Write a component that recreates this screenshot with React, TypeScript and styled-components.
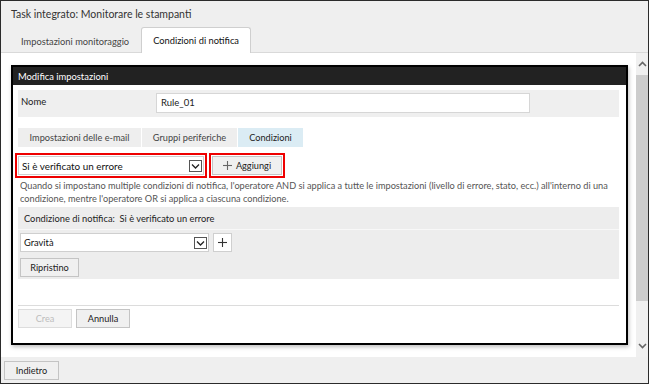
import React from "react";
import styled, { createGlobalStyle } from "styled-components";

const GlobalStyle = createGlobalStyle`
  html, body {
    margin: 0;
    padding: 0;
    background: #ffffff;
  }
  body {
    font-family: Lato, "Noto Sans", "Liberation Sans", sans-serif;
    color: #222;
  }
  * {
    box-sizing: border-box;
  }
`;

const Window = styled.div`
  width: 649px;
  height: 384px;
  border: 1px solid #2b2b2b;
  background: #efefef;
  display: flex;
  flex-direction: column;
  overflow: hidden;
`;

const TitleBar = styled.div`
  height: 26px;
  padding-left: 10px;
  display: flex;
  align-items: center;
  font-size: 10.5px;
  color: #333;
`;

const TabBar = styled.div`
  height: 26px;
  display: flex;
  align-items: flex-end;
  padding-left: 8px;
  gap: 0;
  border-bottom: 1px solid #d9d9d9;
`;

const Tab = styled.div<{ $active?: boolean }>`
  height: ${(p) => (p.$active ? "26px" : "25px")};
  padding: 0 11px;
  display: flex;
  align-items: center;
  font-size: 9.3px;
  color: ${(p) => (p.$active ? "#111" : "#444")};
  background: ${(p) => (p.$active ? "#fff" : "transparent")};
  border: ${(p) => (p.$active ? "1px solid #cfcfcf" : "1px solid transparent")};
  border-bottom: none;
  border-radius: 3px 3px 0 0;
  margin-bottom: -1px;
`;

const Body = styled.div`
  flex: 1;
  display: flex;
  background: #fff;
  min-height: 0;
`;

const Content = styled.div`
  flex: 1;
  min-width: 0;
  padding: 12px 8px 12px 10px;
`;

const Scrollbar = styled.div`
  width: 12px;
  background: #f0f0f0;
  display: flex;
  flex-direction: column;
  align-items: stretch;
`;

const ScrollArrow = styled.div`
  height: 22px;
  display: flex;
  align-items: center;
  justify-content: center;
`;

const ScrollThumb = styled.div`
  height: 226px;
  background: #cdcdcd;
`;

const ScrollTrack = styled.div`
  flex: 1;
`;

const Dialog = styled.div`
  border: 2px solid #000;
  background: #fff;
  box-shadow: 1px 2px 4px rgba(0, 0, 0, 0.25);
  display: flex;
  flex-direction: column;
`;

const DialogHeader = styled.div`
  height: 18px;
  background: #222;
  color: #fff;
  font-size: 9.4px;
  display: flex;
  align-items: center;
  padding-left: 5px;
`;

const DialogBody = styled.div`
  padding: 5px 7px 15px 5px;
  display: flex;
  flex-direction: column;
`;

const NameRow = styled.div`
  height: 27px;
  background: #efefef;
  display: flex;
  align-items: center;
  padding-left: 3px;
`;

const Label = styled.div`
  width: 135px;
  font-size: 9.5px;
  color: #222;
  margin-top: -5px;
`;

const TextInput = styled.div`
  width: 374px;
  height: 20px;
  background: #fff;
  border: 1px solid #d6d6d6;
  font-size: 9.5px;
  display: flex;
  align-items: center;
  padding-left: 4px;
  margin-top: -2px;
`;

const SubTabs = styled.div`
  display: flex;
  gap: 1px;
  margin-top: 11px;
`;

const SubTab = styled.div<{ $active?: boolean; $w: number }>`
  width: ${(p) => p.$w}px;
  height: 19px;
  display: flex;
  align-items: center;
  justify-content: center;
  font-size: 9.2px;
  color: ${(p) => (p.$active ? "#222" : "#444")};
  background: ${(p) => (p.$active ? "#dbecf4" : "#eeeeee")};
`;

const AddRow = styled.div`
  display: flex;
  align-items: center;
  gap: 8px;
  margin-top: 9px;
`;

const Select = styled.div<{ $w: number; $highlight?: boolean }>`
  width: ${(p) => p.$w}px;
  height: 19px;
  background: #fff;
  border: 1px solid #cfcfcf;
  display: flex;
  align-items: center;
  justify-content: space-between;
  padding: 0 1px 0 3px;
  font-size: ${(p) => (p.$highlight ? "9.9px" : "9.3px")};
  color: #111;
  outline: ${(p) => (p.$highlight ? "2px solid #ee0000" : "none")};
  outline-offset: 1px;
`;

const Button = styled.div<{ $w: number; $disabled?: boolean; $highlight?: boolean }>`
  width: ${(p) => p.$w}px;
  height: 19px;
  background: ${(p) => (p.$disabled ? "#f4f4f4" : "#f0f0f0")};
  border: 1px solid ${(p) => (p.$disabled ? "#dddddd" : "#c4c4c4")};
  color: ${(p) => (p.$disabled ? "#bdbdbd" : "#222")};
  font-size: 9.2px;
  display: flex;
  align-items: center;
  justify-content: center;
  gap: 4px;
  outline: ${(p) => (p.$highlight ? "2px solid #ee0000" : "none")};
  outline-offset: 1px;
`;

const PlusButton = styled.div`
  width: 19px;
  height: 19px;
  background: #fff;
  border: 1px solid #cfcfcf;
  display: flex;
  align-items: center;
  justify-content: center;
`;

const HelpText = styled.div`
  margin: 5px 0 2px 2px;
  font-size: 9.2px;
  line-height: 12.5px;
  color: #555;
  white-space: nowrap;
  overflow: hidden;
`;

const ConditionBox = styled.div`
  background: #ededed;
  display: flex;
  flex-direction: column;
`;

const ConditionHeader = styled.div`
  height: 23px;
  display: flex;
  align-items: center;
  padding-left: 6px;
  font-size: 9.3px;
  color: #222;
  border-bottom: 1px solid #f8f8f8;
`;

const ConditionBody = styled.div`
  height: 49px;
  padding: 3px 2px;
  display: flex;
  flex-direction: column;
  gap: 6px;
`;

const InlineRow = styled.div`
  display: flex;
  align-items: center;
  gap: 4px;
`;

const DialogFooter = styled.div`
  margin-top: 26px;
  border-top: 1px solid #dcdcdc;
  padding-top: 3px;
  display: flex;
  gap: 4px;
`;

const BottomBar = styled.div`
  height: 26px;
  display: flex;
  align-items: center;
  padding-left: 3px;
`;

const SelectArrow = () => (
  <svg width="13" height="12" viewBox="0 0 13 12">
    <rect x="0.5" y="0.5" width="12" height="11" fill="#fff" stroke="#555" />
    <polyline points="3,4.5 6.5,8 10,4.5" fill="none" stroke="#222" strokeWidth="1.3" />
  </svg>
);

const PlusIcon = ({ color = "#444" }: { color?: string }) => (
  <svg width="9" height="9" viewBox="0 0 9 9">
    <line x1="4.5" y1="0" x2="4.5" y2="9" stroke={color} strokeWidth="1.1" />
    <line x1="0" y1="4.5" x2="9" y2="4.5" stroke={color} strokeWidth="1.1" />
  </svg>
);

const Chevron = ({ up }: { up?: boolean }) => (
  <svg width="9" height="6" viewBox="0 0 9 6">
    <polyline
      points={up ? "1,5 4.5,1.5 8,5" : "1,1 4.5,4.5 8,1"}
      fill="none"
      stroke="#666"
      strokeWidth="1.6"
    />
  </svg>
);

const App = () => {
  return (
    <>
      <GlobalStyle />
      <Window>
        <TitleBar>Task integrato: Monitorare le stampanti</TitleBar>
        <TabBar>
          <Tab>Impostazioni monitoraggio</Tab>
          <Tab $active>Condizioni di notifica</Tab>
        </TabBar>
        <Body>
          <Content>
            <Dialog>
              <DialogHeader>Modifica impostazioni</DialogHeader>
              <DialogBody>
                <NameRow>
                  <Label>Nome</Label>
                  <TextInput>Rule_01</TextInput>
                </NameRow>
                <SubTabs>
                  <SubTab $w={123}>Impostazioni delle e-mail</SubTab>
                  <SubTab $w={95}>Gruppi periferiche</SubTab>
                  <SubTab $w={65} $active>
                    Condizioni
                  </SubTab>
                </SubTabs>
                <AddRow>
                  <Select $w={186} $highlight>
                    <span>Si è verificato un errore</span>
                    <SelectArrow />
                  </Select>
                  <Button $w={70} $highlight>
                    <PlusIcon color="#666" />
                    Aggiungi
                  </Button>
                </AddRow>
                <HelpText>
                  Quando si impostano multiple condizioni di notifica, l'operatore AND si applica a tutte le
                  impostazioni (livello di errore, stato, ecc.) all'interno di una
                  <br />
                  condizione, mentre l'operatore OR si applica a ciascuna condizione.
                </HelpText>
                <ConditionBox>
                  <ConditionHeader>Condizione di notifica:&nbsp;&nbsp;Si è verificato un errore</ConditionHeader>
                  <ConditionBody>
                    <InlineRow>
                      <Select $w={189}>
                        <span>Gravità</span>
                        <SelectArrow />
                      </Select>
                      <PlusButton>
                        <PlusIcon color="#333" />
                      </PlusButton>
                    </InlineRow>
                    <InlineRow>
                      <Button $w={59}>Ripristino</Button>
                    </InlineRow>
                  </ConditionBody>
                </ConditionBox>
                <DialogFooter>
                  <Button $w={54} $disabled>
                    Crea
                  </Button>
                  <Button $w={54}>Annulla</Button>
                </DialogFooter>
              </DialogBody>
            </Dialog>
          </Content>
          <Scrollbar>
            <ScrollArrow>
              <Chevron up />
            </ScrollArrow>
            <ScrollThumb />
            <ScrollTrack />
            <ScrollArrow>
              <Chevron />
            </ScrollArrow>
          </Scrollbar>
        </Body>
        <BottomBar>
          <Button $w={55}>Indietro</Button>
        </BottomBar>
      </Window>
    </>
  );
};

export default App;
